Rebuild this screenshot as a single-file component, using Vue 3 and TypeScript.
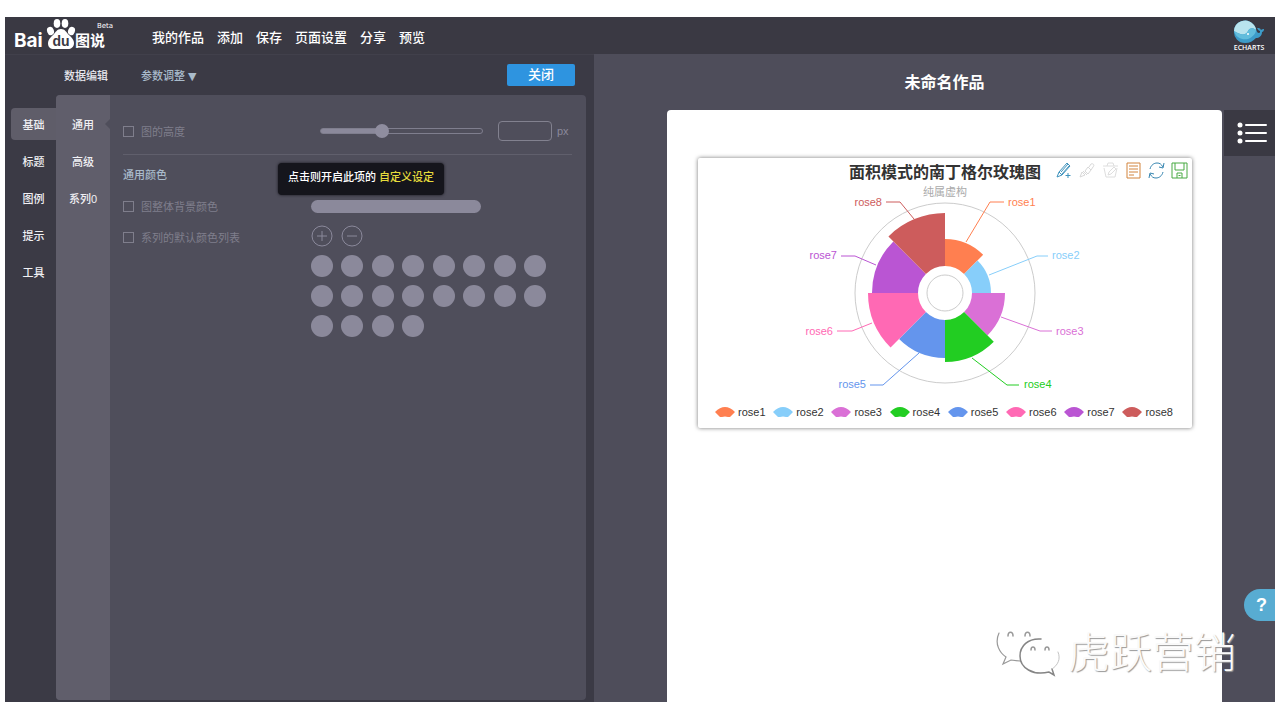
<script setup lang="ts">
import { ref } from 'vue'

interface Petal {
  name: string
  color: string
  radius: number
  line: string
  x: number
  y: number
  anchor: 'start' | 'end'
}

const nav: string[] = ['我的作品', '添加', '保存', '页面设置', '分享', '预览']
const groups: string[] = ['基础', '标题', '图例', '提示', '工具']
const sections: string[] = ['通用', '高级', '系列0']
const activeGroup = ref('基础')
const activeSection = ref('通用')
const chartHeight = ref(37)

const petals: Petal[] = [
  { name: 'rose1', color: '#ff7f50', radius: 54, line: '268,84 292,44 306,44', x: 310, y: 48, anchor: 'start' },
  { name: 'rose2', color: '#87cefa', radius: 46, line: '291,117 339,98 350,98', x: 354, y: 101, anchor: 'start' },
  { name: 'rose3', color: '#da70d6', radius: 60, line: '303,159 342,173 354,173', x: 358, y: 177, anchor: 'start' },
  { name: 'rose4', color: '#22cd22', radius: 69, line: '274,200 309,227 321,227', x: 326, y: 230, anchor: 'start' },
  { name: 'rose5', color: '#6495ed', radius: 65, line: '221,195 185,227 172,227', x: 168, y: 230, anchor: 'end' },
  { name: 'rose6', color: '#ff69b4', radius: 77, line: '174,165 154,173 139,173', x: 135, y: 177, anchor: 'end' },
  { name: 'rose7', color: '#ba55d3', radius: 73, line: '178,107 157,98 143,98', x: 139, y: 101, anchor: 'end' },
  { name: 'rose8', color: '#cd5c5c', radius: 80, line: '216,61 202,44 188,44', x: 184, y: 48, anchor: 'end' },
]

const cx = 247
const cy = 135
const hole = 27

function sector(index: number, radius: number): string {
  const a = (index * Math.PI) / 4
  const b = ((index + 1) * Math.PI) / 4
  const point = (r: number, t: number): string =>
    `${(cx + r * Math.sin(t)).toFixed(2)} ${(cy - r * Math.cos(t)).toFixed(2)}`
  return `M${point(hole, a)}L${point(radius, a)}A${radius} ${radius} 0 0 1 ${point(radius, b)}L${point(hole, b)}A${hole} ${hole} 0 0 0 ${point(hole, a)}Z`
}
</script>

<template>
  <div class="screen">
    <div class="app">
      <header class="topbar">
        <svg class="logo" viewBox="0 0 104 37" role="img" aria-label="Baidu 图说">
          <g fill="#fff">
            <text x="1" y="30" class="logo-latin">Bai</text>
            <ellipse cx="37.500" cy="14" rx="3.400" ry="4.200" transform="rotate(-20 37.500 14)" />
            <ellipse cx="44" cy="6.500" rx="3.300" ry="4.400" />
            <ellipse cx="52" cy="6.500" rx="3.300" ry="4.400" />
            <ellipse cx="58.500" cy="14" rx="3.400" ry="4.200" transform="rotate(20 58.500 14)" />
            <path d="M48 12c4 0 5 3 8 6s5 5 5 8c0 4-3 6-6 6H41c-4 0-6-2-6-6 0-3 2-5 5-8s4-6 8-6z" />
            <text x="62" y="29" class="logo-han">图说</text>
            <text x="84" y="11" class="logo-beta">Beta</text>
          </g>
          <text x="48" y="29" text-anchor="middle" class="logo-du">du</text>
        </svg>
        <nav class="nav">
          <a v-for="item in nav" :key="item" href="#">{{ item }}</a>
        </nav>
        <a href="#" class="echarts" aria-label="ECHARTS">
          <svg viewBox="0 0 32 23" width="32" height="23" aria-hidden="true">
            <path d="M1 11A11 11 0 0 1 20 4c4 4 3 9 6 9 1 0 1-1 1-2-1 0-2-1-3-3 2 0 3 0 4 2 1-1 2-1 3-1 0 2-1 3-2 3 0 4-3 6-6 6-3 3-6 5-11 5A11 11 0 0 1 1 11z" fill="#3d9cc9" />
            <path d="M1 11A11 11 0 0 1 20 4c2 2 3 4 3 6-3-3-7-2-8 1-2 4-6 5-14 0z" fill="#b9e4ee" />
            <path d="M1 11c8 5 12 4 14 0 1-3 5-4 8-1 0 3-3 7-8 9-6 1-12-1-14-8z" fill="#62bddc" />
            <circle cx="15" cy="14" r="1" fill="#fff" />
          </svg>
          <span>ECHARTS</span>
        </a>
      </header>

      <main class="body">
        <section class="editor">
          <div class="editor-head">
            <button type="button" class="mode current">数据编辑</button>
            <button type="button" class="mode">参数调整 <span class="caret">▼</span></button>
            <button type="button" class="close">关闭</button>
          </div>
          <div class="editor-body">
            <div class="groups">
              <button
                v-for="g in groups"
                :key="g"
                type="button"
                :class="{ active: g === activeGroup }"
                @click="activeGroup = g"
              >{{ g }}</button>
            </div>
            <div class="panel">
              <div class="sections">
                <button
                  v-for="s in sections"
                  :key="s"
                  type="button"
                  :class="{ active: s === activeSection }"
                  @click="activeSection = s"
                >{{ s }}</button>
              </div>
              <form class="settings" @submit.prevent>
                <div class="row height-row">
                  <label class="check"><input type="checkbox" />图的高度</label>
                  <input v-model.number="chartHeight" class="slider" type="range" min="0" max="100" aria-label="图的高度" />
                  <label class="unit"><input type="text" class="amount" />px</label>
                </div>
                <h2>通用颜色</h2>
                <div class="row">
                  <label class="check"><input type="checkbox" />图整体背景颜色</label>
                  <button type="button" class="color-bar" aria-label="图整体背景颜色"></button>
                  <div class="tip" role="tooltip">点击则开启此项的 <em>自定义设定</em></div>
                </div>
                <div class="row list-row">
                  <label class="check"><input type="checkbox" />系列的默认颜色列表</label>
                  <div class="colors">
                    <div class="adjust">
                      <button type="button" aria-label="添加">
                        <svg viewBox="0 0 22 22"><circle cx="11" cy="11" r="10" /><path d="M6 11h10M11 6v10" /></svg>
                      </button>
                      <button type="button" aria-label="移除">
                        <svg viewBox="0 0 22 22"><circle cx="11" cy="11" r="10" /><path d="M6 11h10" /></svg>
                      </button>
                    </div>
                    <div class="swatches">
                      <button v-for="n in 20" :key="n" type="button" :aria-label="`颜色 ${n}`"></button>
                    </div>
                  </div>
                </div>
              </form>
            </div>
          </div>
        </section>

        <section class="workspace">
          <h1>未命名作品</h1>
          <div class="stage">
            <article class="page">
              <div class="chart">
                <svg class="rose" viewBox="0 0 494 240" role="img" aria-label="面积模式的南丁格尔玫瑰图">
                  <text x="247" y="20" text-anchor="middle" class="chart-title">面积模式的南丁格尔玫瑰图</text>
                  <circle :cx="cx" :cy="cy" r="90" class="ring" />
                  <text x="247" y="38" text-anchor="middle" class="chart-sub">纯属虚构</text>
                  <circle :cx="cx" :cy="cy" r="18" class="ring" />
                  <g v-for="(p, i) in petals" :key="p.name">
                    <path :d="sector(i, p.radius)" :fill="p.color" />
                    <polyline :points="p.line" fill="none" :stroke="p.color" class="lead" />
                    <text :x="p.x" :y="p.y" :text-anchor="p.anchor" :fill="p.color" class="tag">{{ p.name }}</text>
                  </g>
                </svg>
                <div class="tools">
                  <button type="button" aria-label="辅助线开关">
                    <svg viewBox="0 0 17 17" stroke="#3f93bd"><path d="M1 15l2-5 8-9 3 3-8 9zM3 10l3 3M5 10l7-8M6 12l7-8M12 11v5M9.500 13.500h5" /></svg>
                  </button>
                  <button type="button" aria-label="删除辅助线">
                    <svg viewBox="0 0 17 17" stroke="#d8d8d8"><path d="M1 15l2-5 3 3zM4 9l4 4M6 9l3 3 3-4-3-3zM10 5l2-3c2-1 4 1 2 3l-2 3" /></svg>
                  </button>
                  <button type="button" aria-label="清空辅助线">
                    <svg viewBox="0 0 17 17" stroke="#dedede"><path d="M1 4h15M5 4l1-3h5l1 3M2 6l2 9h9l2-9M6 13l1-3 5-5 2 2-5 5z" /></svg>
                  </button>
                  <button type="button" aria-label="数据视图">
                    <svg viewBox="0 0 17 17" stroke="#d2843c"><path d="M2 1h13v15H2zM4 4h9M4 7h9M4 10h9M4 13h5" /></svg>
                  </button>
                  <button type="button" aria-label="还原">
                    <svg viewBox="0 0 17 17" stroke="#3585b0"><path d="M2 7c1-4 4-6 7-6 3 0 4 1 6 4M16 1l-1 5-4-1M15 10c-1 4-4 6-7 6-3 0-4-1-6-4M1 16l1-5 4 1" /></svg>
                  </button>
                  <button type="button" aria-label="保存为图片">
                    <svg viewBox="0 0 17 17" stroke="#49aa42"><path d="M1 1h15v15H1zM4 1v7h9V1M6 16v-5h5v5M7.500 13.500h2" /></svg>
                  </button>
                </div>
                <ul class="legend">
                  <li v-for="p in petals" :key="p.name">
                    <svg viewBox="0 0 20 11" width="20" height="11"><path d="M0 5Q10-5 20 5L15 10H13Q10 9 7 10H5Z" :fill="p.color" /></svg>
                    <span>{{ p.name }}</span>
                  </li>
                </ul>
              </div>
            </article>
            <aside class="rail">
              <button type="button" class="menu" aria-label="列表">
                <svg viewBox="0 0 30 22" width="30" height="22">
                  <g fill="#fff"><circle cx="3" cy="3" r="2.500" /><circle cx="3" cy="11" r="2.500" /><circle cx="3" cy="19" r="2.500" /></g>
                  <path d="M9 3h20M9 11h20M9 19h20" stroke="#fff" stroke-width="2" stroke-linecap="round" />
                </svg>
              </button>
            </aside>
          </div>
          <button type="button" class="help">?</button>
          <div class="watermark">
            <svg viewBox="0 0 66 52" width="66" height="52" fill="none" stroke-linecap="round">
              <path d="M4 7C-1 18 5 27 11 31L8 38l8-4 9 1" stroke="#999" stroke-width="1.200" />
              <path d="M46 13C33 12 25 20 25 30c0 12 13 20 29 16l5 3-2-6" stroke="#858585" stroke-width="1.500" />
              <path d="M57 43c6-4 9-10 6-17" stroke="#c4c4c4" />
              <path d="M13 10c0-5 5-5 5 0M30 10c0-5 5-5 5 0M36 24c0-4 4-4 4 0M50 24c0-4 4-4 4 0" stroke="#999" stroke-width="1.500" />
            </svg>
            <span>虎跃营销</span>
          </div>
        </section>
      </main>
    </div>
  </div>
</template>

<style>
body {
  margin: 0;
  background: #fff;
}
</style>

<style scoped>
.screen,
.screen * {
  box-sizing: border-box;
}

.screen {
  display: flex;
  min-height: 100vh;
  padding: 17px 5px 18px;
  font-family: 'Liberation Sans', 'Noto Sans CJK SC', sans-serif;
  font-size: 11px;
  color: #fff;
}

button,
input {
  font: inherit;
  color: inherit;
  margin: 0;
}

button {
  padding: 0;
  border: 0;
  background: none;
  cursor: pointer;
}

a {
  color: inherit;
  text-decoration: none;
}

.app {
  flex: 1;
  display: flex;
  flex-direction: column;
  background: #4e4d5a;
}

.topbar {
  display: flex;
  align-items: center;
  height: 37px;
  padding: 0 10px 0 8px;
  background: #3a3943;
}

.logo {
  width: 104px;
  height: 37px;
}

.logo-latin {
  font: bold 19px Inter, sans-serif;
}

.logo-han {
  font: bold 15px 'Noto Sans CJK SC', sans-serif;
}

.logo-beta {
  font: 7px 'DejaVu Sans', sans-serif;
}

.logo-du {
  font: bold 14px 'Liberation Sans', sans-serif;
  fill: #3a3943;
}

.nav {
  display: flex;
  gap: 13px;
  margin-left: 35px;
  padding-top: 1px;
  font-size: 13px;
  font-weight: 500;
}

.echarts {
  display: flex;
  flex-direction: column;
  align-items: center;
  margin-left: auto;
  font: 7px/9px 'Open Sans', sans-serif;
  font-weight: 600;
}

.body {
  flex: 1;
  display: flex;
}

.editor {
  flex: 575 1 0;
  display: flex;
  flex-direction: column;
  padding: 0 8px 2px 6px;
  background: #3b3a45;
  border-top: 1px solid #41404b;
}

.editor-head {
  display: flex;
  align-items: center;
  height: 40px;
  padding: 0 11px 0 53px;
}

.mode {
  margin-right: 33px;
  font-weight: 500;
  color: #a9bbcb;
}

.mode.current {
  color: #e8e8ee;
}

.caret {
  font-family: 'DejaVu Sans', sans-serif;
}

.close {
  width: 68px;
  height: 22px;
  margin-left: auto;
  border-radius: 2px;
  background: #2e94e0;
  font-size: 13px;
  line-height: 20px;
  font-weight: 500;
}

.editor-body {
  flex: 1;
  display: flex;
}

.groups {
  display: flex;
  flex-direction: column;
  gap: 5px;
  width: 45px;
  padding-top: 13px;
}

.groups button,
.sections button {
  height: 32px;
  padding-bottom: 1px;
  font-weight: 500;
  color: #f0f0f4;
}

.groups .active {
  border-radius: 4px 0 0 4px;
  background: #5f5d69;
}

.panel {
  flex: 1;
  display: flex;
  border-radius: 4px;
  background: #4f4e5b;
}

.sections {
  display: flex;
  flex-direction: column;
  gap: 5px;
  width: 54px;
  padding-top: 13px;
  border-radius: 4px 0 0 4px;
  background: #605e6b;
}

.sections .active {
  position: relative;
}

.sections .active::after {
  content: '';
  position: absolute;
  top: 11px;
  right: 0;
  border: 5px solid transparent;
  border-left: 0;
  border-right-color: #4f4e5b;
}

.settings {
  flex: 1;
  padding: 17px 14px 0 13px;
  color: #7f7e8c;
}

.row {
  position: relative;
  display: flex;
  align-items: center;
}

.height-row {
  height: 43px;
  padding-bottom: 4px;
  border-bottom: 1px solid #605f6c;
}

.check {
  flex: 0 0 188px;
  display: flex;
  align-items: center;
  gap: 7px;
}

.check input {
  appearance: none;
  width: 11px;
  height: 11px;
  border: 1px solid #7f7e8c;
}

.slider {
  appearance: none;
  width: 163px;
  height: 6px;
  margin-left: 9px;
  border: 1px solid #7f7e8e;
  border-radius: 3px;
  background: linear-gradient(to right, #8b899b 38%, transparent 38%);
}

.slider::-webkit-slider-thumb {
  appearance: none;
  width: 14px;
  height: 14px;
  border-radius: 50%;
  background: #8f8d9f;
}

.unit {
  display: flex;
  align-items: center;
  gap: 5px;
  margin-left: 15px;
  color: #8b899b;
}

.amount {
  width: 54px;
  height: 20px;
  border: 1px solid #82818f;
  border-radius: 4px;
  background: transparent;
}

h2 {
  margin: 10px 0;
  font-size: 11px;
  line-height: 20px;
  font-weight: 500;
  color: #a9bbcb;
}

.color-bar {
  width: 170px;
  height: 13px;
  margin: 5px 0 4px;
  border-radius: 7px;
  background: #8b899b;
}

.list-row {
  align-items: flex-start;
  margin-top: 8px;
}

.list-row .check {
  padding-top: 4px;
}

.colors {
  width: 235px;
}

.adjust {
  display: flex;
  gap: 8px;
  margin-bottom: 8px;
}

.adjust button,
.adjust svg {
  display: block;
  width: 22px;
  height: 22px;
}

.adjust svg {
  fill: none;
  stroke: #8b899b;
}

.swatches {
  display: grid;
  grid-template-columns: repeat(8, 22px);
  justify-content: space-between;
  row-gap: 8px;
}

.swatches button {
  height: 22px;
  border-radius: 50%;
  background: #8b899b;
}

.tip {
  position: absolute;
  left: 155px;
  bottom: 100%;
  height: 32px;
  padding: 0 10px;
  border-radius: 4px;
  background: #15151c;
  box-shadow: 0 0 3px #15151c;
  line-height: 29px;
  font-weight: 500;
  color: #fff;
  white-space: nowrap;
}

.tip em {
  font-style: normal;
  color: #e6dc3c;
}

.workspace {
  position: relative;
  flex: 608 1 0;
  display: flex;
  flex-direction: column;
  padding-left: 73px;
}

h1 {
  margin: 0;
  padding: 17px 53px 15px 0;
  font-size: 16px;
  line-height: 24px;
  text-align: center;
}

.stage {
  flex: 1;
  display: flex;
}

.page {
  flex: 1;
  padding: 48px 30px 0 31px;
  border-radius: 4px 4px 0 0;
  background: #fff;
}

.chart {
  position: relative;
  background: #fff;
  border-radius: 2px;
  box-shadow: 0 0 4px #777;
  color: #333;
}

.rose {
  display: block;
  width: 100%;
}

.chart-title {
  font-size: 16px;
  font-weight: bold;
  fill: #333;
}

.chart-sub {
  font-size: 11px;
  fill: #aaa;
}

.ring {
  fill: none;
  stroke: #ccc;
}

.lead {
  stroke-width: 1px;
}

.tag {
  font-size: 11px;
}

.tools {
  position: absolute;
  top: 4px;
  right: 4px;
  display: flex;
  gap: 6px;
}

.tools button,
.tools svg {
  display: block;
  width: 17px;
  height: 17px;
}

.tools svg {
  fill: none;
}

.legend {
  display: flex;
  justify-content: space-between;
  align-items: center;
  height: 30px;
  margin: 0;
  padding: 0 19px 2px 17px;
  list-style: none;
}

.legend li {
  display: flex;
  align-items: center;
  gap: 3px;
}

.rail {
  width: 53px;
  padding-left: 2px;
}

.menu {
  display: flex;
  align-items: center;
  justify-content: center;
  width: 100%;
  height: 46px;
  padding-left: 4px;
  background: #3a3943;
}

.help {
  position: absolute;
  right: 0;
  bottom: 81px;
  width: 31px;
  height: 32px;
  padding-left: 4px;
  border-radius: 16px 0 0 16px;
  background: #58acd2;
  font-size: 18px;
  font-weight: bold;
}

.watermark {
  position: absolute;
  right: 39px;
  bottom: 20px;
  display: flex;
  align-items: center;
  gap: 7px;
  pointer-events: none;
}

.watermark span {
  padding-bottom: 4px;
  font: 42px/56px 'Noto Sans CJK SC', sans-serif;
  font-weight: 300;
  color: #fafafa;
  text-shadow: 1px 1px 1px #999;
}
</style>
